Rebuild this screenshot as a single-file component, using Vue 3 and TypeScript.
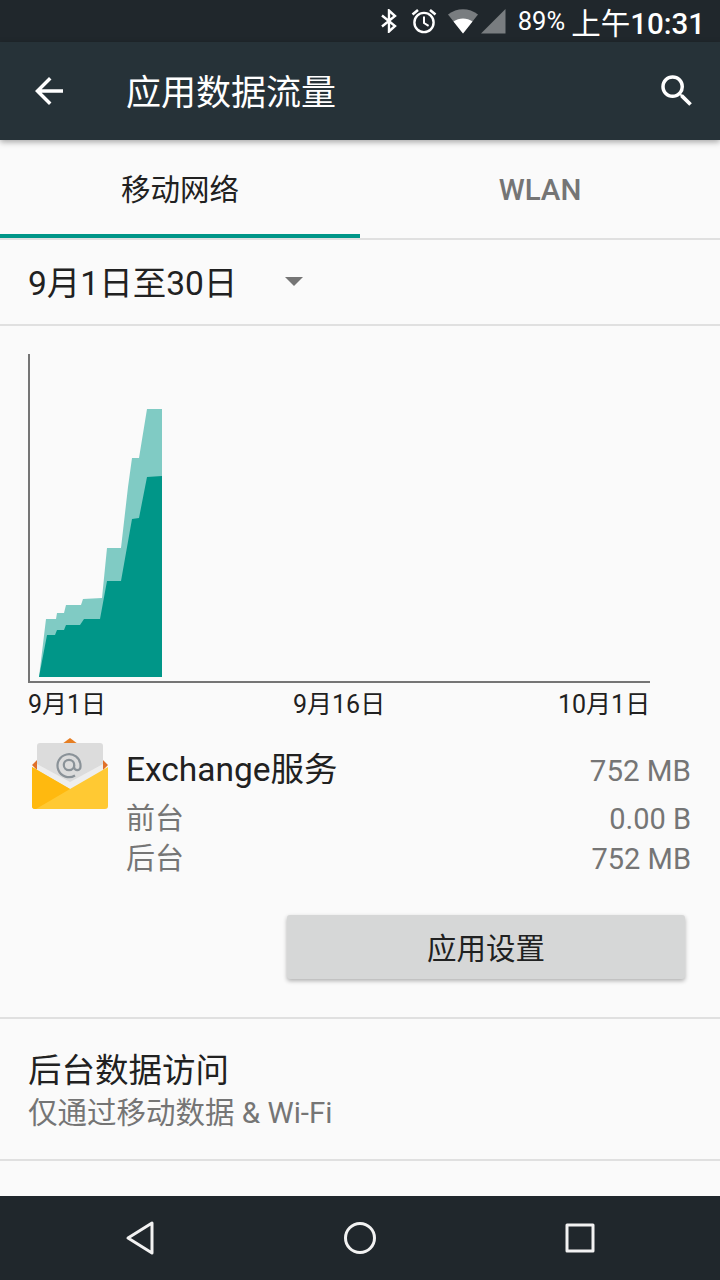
<script setup lang="ts">
const lightArea = "39,677 46,619 56,619 57,613 64,613 66,605 81,605 83,599 102,598 107,548 121,548 128,487 132,458 139,458 147,409 162,409 162,677"
const darkArea = "39,677 47,635 55,635 57,630 64,630 66,625 80,625 84,619 100,619 107,581 121,581 132,519 139,518 147,477 162,476 162,677"
const dateLabels = ["9月1日", "9月16日", "10月1日"]
</script>

<template>
  <div class="screen">
    <div class="status-bar">
      <svg class="st-bt" width="18" height="24" viewBox="0 0 18 24" fill="none" stroke="#fff" stroke-width="2.4">
        <path d="M2 6.500 15 17 9 22.500V1.500L15 7 2 17.500" />
      </svg>
      <svg class="st-alarm" width="26" height="26" viewBox="0 0 26 26" fill="none" stroke="#fff">
        <circle cx="13" cy="14.500" r="9.600" stroke-width="2.400" />
        <path d="M13 8.500V15l4.600 2.800" stroke-width="2" />
        <path d="M1.500 6.500 7 2M24.500 6.500 19 2" stroke-width="2.600" />
      </svg>
      <svg class="st-wifi" width="32" height="26" viewBox="0 0 32 26">
        <path d="M1 6.500C10 -0.500 22 -0.500 31 6.500L16 25.500Z" fill="#fff" fill-opacity="0.4" />
        <path d="M6.500 13.500C12 9.500 20 9.500 25.500 13.500L16 25.500Z" fill="#fff" />
      </svg>
      <svg class="st-signal" width="26" height="26" viewBox="0 0 26 26">
        <path d="M25.500 1V25.500H1Z" fill="#fff" fill-opacity="0.4" />
      </svg>
      <span class="st-batt">89%</span>
      <span class="st-clock">上午<b>10:31</b></span>
    </div>

    <header class="toolbar">
      <svg class="tb-icon" width="42" height="42" viewBox="0 0 24 24" fill="#fff">
        <path d="M20 11H7.830l5.590-5.590L12 4l-8 8 8 8 1.410-1.410L7.830 13H20v-2z" />
      </svg>
      <h1 class="tb-title">应用数据流量</h1>
      <svg class="tb-icon" width="42" height="42" viewBox="0 0 24 24" fill="#fff">
        <path d="M15.500 14h-.79l-.28-.27A6.470 6.470 0 0 0 16 9.500 6.500 6.500 0 1 0 9.500 16c1.610 0 3.090-.59 4.230-1.570l.27.28v.79l5 4.990L20.490 19l-4.990-5zm-6 0C7.010 14 5 11.990 5 9.500S7.010 5 9.500 5 14 7.010 14 9.500 11.990 14 9.500 14z" />
      </svg>
    </header>

    <nav class="tabs">
      <div class="tab active">移动网络</div>
      <div class="tab">WLAN</div>
    </nav>

    <div class="cycle">
      <span class="cycle-text">9月1日至30日</span>
      <span class="cycle-caret"></span>
    </div>

    <section class="chart">
      <svg class="chart-svg" width="720" height="360" viewBox="0 326 720 360">
        <path d="M29 354V682H650" fill="none" stroke="#757575" stroke-width="2" />
        <polygon :points="lightArea" fill="#80cbc4" />
        <polygon :points="darkArea" fill="#009688" />
      </svg>
      <div class="chart-labels">
        <span v-for="label in dateLabels" :key="label">{{ label }}</span>
      </div>
    </section>

    <section class="app-detail">
      <svg class="app-icon" width="76" height="72" viewBox="0 0 76 72">
        <path d="M38 0 46 6H30Z" fill="#e67e22" />
        <path d="M0 27 7 20V34ZM76 27 69 20V34Z" fill="#e0702a" />
        <rect x="5" y="5" width="66" height="50" rx="3" fill="#dcdcdc" />
        <path d="M5 26 38 44 71 26V55H5Z" fill="#eeeeee" />
        <path d="M43 37.500A11.500 11.500 0 1 1 48.500 27v2a3.200 3.200 0 0 1-6.400 0v-2" fill="none" stroke="#8a9298" stroke-width="2.200" />
        <circle cx="37" cy="27" r="5.200" fill="none" stroke="#8a9298" stroke-width="2.200" />
        <path d="M0 29 38 51 76 29V68a3 3 0 0 1-3 3H3a3 3 0 0 1-3-3Z" fill="#ffc933" />
        <path d="M0 29 38 51 4 71H3a3 3 0 0 1-3-3Z" fill="#ffb90f" />
      </svg>
      <div class="app-info">
        <div class="app-row title"><span class="name">Exchange服务</span><span class="val">752 MB</span></div>
        <div class="app-row sub"><span>前台</span><span>0.00 B</span></div>
        <div class="app-row sub"><span>后台</span><span>752 MB</span></div>
      </div>
    </section>

    <div class="action">
      <button class="settings-btn">应用设置</button>
    </div>

    <section class="pref">
      <div class="pref-title">后台数据访问</div>
      <div class="pref-sub">仅通过移动数据 &amp; Wi-Fi</div>
    </section>

    <footer class="nav-bar">
      <svg width="30" height="36" viewBox="0 0 30 36" fill="none" stroke="#f2f2f2" stroke-width="3" stroke-linejoin="round">
        <path d="M27 3V33L3 18Z" />
      </svg>
      <svg width="36" height="36" viewBox="0 0 36 36" fill="none" stroke="#f2f2f2" stroke-width="3">
        <circle cx="18" cy="18" r="14.500" />
      </svg>
      <svg width="30" height="30" viewBox="0 0 30 30" fill="none" stroke="#f2f2f2" stroke-width="3" stroke-linejoin="round">
        <rect x="2" y="2" width="26" height="26" />
      </svg>
    </footer>
  </div>
</template>

<style scoped>
.screen {
  width: 720px;
  height: 1280px;
  display: flex;
  flex-direction: column;
  overflow: hidden;
  background: #fafafa;
  color: #212121;
  font-family: Roboto, "Noto Sans CJK SC", sans-serif;
}

.status-bar {
  height: 42px;
  flex: none;
  display: flex;
  align-items: center;
  justify-content: flex-end;
  padding-right: 15px;
  background: #20272c;
  color: #fff;
}
.st-bt { margin-right: 13px; }
.st-alarm { margin-right: 10px; }
.st-wifi { margin-right: 1px; }
.st-signal { margin-right: 12px; }
.st-batt { font-size: 25.5px; margin-right: 6px; }
.st-clock { font-size: 29.5px; }
.st-clock b { font-weight: 500; }

.toolbar {
  height: 98px;
  flex: none;
  display: flex;
  align-items: center;
  padding: 0 22px 0 28px;
  background: #263238;
  box-shadow: 0 2px 6px rgba(0, 0, 0, 0.35);
  position: relative;
}
.tb-title {
  flex: 1;
  margin: 0 0 4px 56px;
  font-size: 35px;
  font-weight: 400;
  color: #fff;
}

.tabs {
  height: 100px;
  flex: none;
  display: flex;
  border-bottom: 2px solid #e0e0e0;
  box-sizing: border-box;
}
.tab {
  width: 360px;
  display: flex;
  align-items: center;
  justify-content: center;
  height: 98px;
  padding-top: 2px;
  box-sizing: border-box;
  font-size: 29.5px;
  font-weight: 500;
  color: #757575;
}
.tab.active {
  padding-top: 0;
  color: #212121;
  font-weight: 400;
  border-bottom: 4px solid #009688;
}

.cycle {
  height: 86px;
  flex: none;
  display: flex;
  align-items: center;
  padding: 0 0 3px 28px;
  border-bottom: 2px solid #e0e0e0;
  box-sizing: border-box;
}
.cycle-text { font-size: 33.5px; }
.cycle-caret {
  margin: 2px 0 0 48px;
  width: 0;
  height: 0;
  border-left: 9px solid transparent;
  border-right: 9px solid transparent;
  border-top: 9px solid #757575;
}

.chart { flex: none; }
.chart-svg { display: block; }
.chart-labels {
  display: grid;
  grid-template-columns: 265px 265px auto;
  margin-left: 28px;
  height: 38px;
  font-size: 25px;
  line-height: 38px;
}

.app-detail {
  display: flex;
  flex: none;
  padding: 14px 29px 0 32px;
  height: 189px;
  box-sizing: border-box;
}
.app-icon { flex: none; }
.app-info { flex: 1; margin: 14px 0 0 18px; }
.app-row {
  display: flex;
  justify-content: space-between;
  color: #757575;
  font-size: 29px;
  line-height: 40px;
}
.app-row.title { height: 47px; line-height: 36px; }
.app-row .name { font-size: 33.5px; color: #212121; }
.app-row .val { font-size: 29.5px; line-height: 38px; }

.action {
  height: 106px;
  flex: none;
  display: flex;
  justify-content: flex-end;
  padding-right: 35px;
  border-bottom: 2px solid #e0e0e0;
  box-sizing: border-box;
}
.settings-btn {
  width: 398px;
  height: 64px;
  border: 0;
  border-radius: 3px;
  margin-top: 2px;
  padding: 0 0 3px;
  background: #d6d7d7;
  box-shadow: 0 2px 4px rgba(0, 0, 0, 0.3);
  font-family: inherit;
  font-size: 29.5px;
  color: #212121;
}

.pref {
  height: 142px;
  flex: none;
  padding: 30px 28px 0;
  border-bottom: 2px solid #e0e0e0;
  box-sizing: border-box;
}
.pref-title { font-size: 33.500px; line-height: 44px; }
.pref-sub { font-size: 29.500px; line-height: 40px; color: #757575; }

.nav-bar {
  margin-top: auto;
  height: 84px;
  flex: none;
  display: flex;
  align-items: center;
  background: #20272c;
  padding-left: 125px;
  gap: 187px;
}
</style>

<style>
body { background: #fafafa; }
</style>
